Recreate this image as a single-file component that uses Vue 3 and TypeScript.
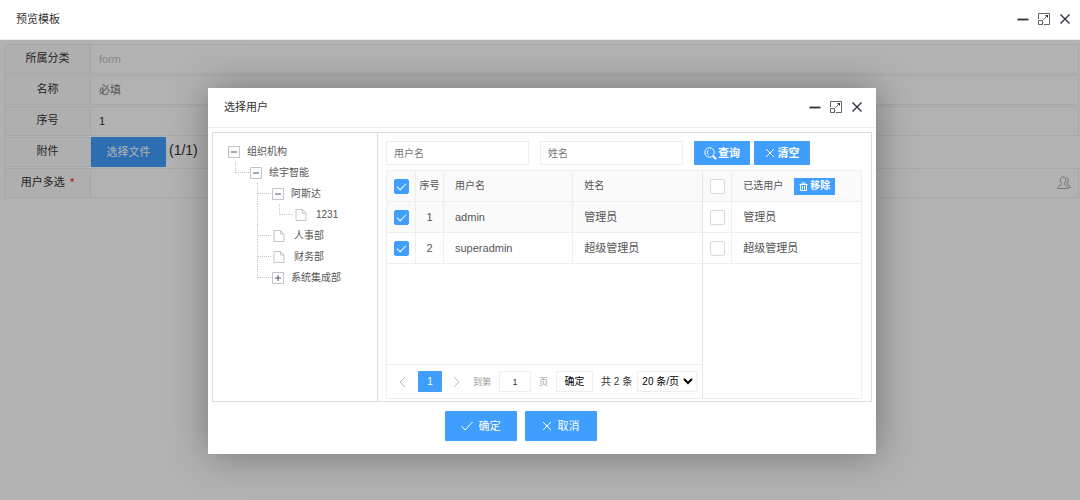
<script setup lang="ts">
import { ref, computed } from 'vue'

type Guide = 'blank' | 'line' | 'tee' | 'end'
interface TreeNode {
  label: string
  kind: 'open' | 'closed' | 'file'
  guides: Guide[]
}
interface User {
  account: string
  name: string
  checked: boolean
  picked: boolean
}

const category = ref('form')
const templateName = ref('')
const order = ref('1')
const members = ref('')
const accountQuery = ref('')
const nameQuery = ref('')
const pageNumber = ref('1')
const pageSize = ref('20')
const allPicked = ref(false)

const tree: TreeNode[] = [
  { label: '组织机构', kind: 'open', guides: [] },
  { label: '绘宇智能', kind: 'open', guides: ['end'] },
  { label: '阿斯达', kind: 'open', guides: ['blank', 'tee'] },
  { label: '1231', kind: 'file', guides: ['blank', 'line', 'end'] },
  { label: '人事部', kind: 'file', guides: ['blank', 'tee'] },
  { label: '财务部', kind: 'file', guides: ['blank', 'tee'] },
  { label: '系统集成部', kind: 'closed', guides: ['blank', 'end'] },
]

const users = ref<User[]>([
  { account: 'admin', name: '管理员', checked: true, picked: false },
  { account: 'superadmin', name: '超级管理员', checked: true, picked: false },
])

const allChecked = computed({
  get: () => users.value.every((u) => u.checked),
  set: (v: boolean) => users.value.forEach((u) => (u.checked = v)),
})

function clearQuery() {
  accountQuery.value = ''
  nameQuery.value = ''
}
</script>

<template>
  <div class="page">
    <header class="titlebar">
      <h1>预览模板</h1>
      <div class="window-tools">
        <button type="button" aria-label="最小化">
          <svg viewBox="0 0 12 12"><path d="M.5 6.500h11" stroke-width="1.800" /></svg>
        </button>
        <button type="button" aria-label="最大化">
          <svg class="expand" viewBox="0 0 12 12"><path d="M.5 6V.5h11v11H6M.5 7.500h4v4h-4zM5.500 6.500l3.500-3.500" /><path class="head" d="M7 2h3v3z" /></svg>
        </button>
        <button type="button" aria-label="关闭">
          <svg viewBox="0 0 12 12"><path d="M1.500 1.500l9 9M10.500 1.500l-9 9" stroke-width="1.300" /></svg>
        </button>
      </div>
    </header>

    <main class="stage">
      <form class="form" @submit.prevent>
        <div class="row">
          <label for="f-category">所属分类</label>
          <div class="field"><input id="f-category" v-model="category" class="dim" type="text" disabled /></div>
        </div>
        <div class="row">
          <label for="f-name">名称</label>
          <div class="field"><input id="f-name" v-model="templateName" type="text" placeholder="必填" /></div>
        </div>
        <div class="row">
          <label for="f-order">序号</label>
          <div class="field"><input id="f-order" v-model="order" type="text" /></div>
        </div>
        <div class="row">
          <label for="f-file">附件</label>
          <div class="attach">
            <button id="f-file" type="button" class="primary upload">选择文件</button>
            <span class="count">(1/1)</span>
          </div>
        </div>
        <div class="row">
          <label for="f-members">用户多选 <span class="required">*</span></label>
          <div class="field">
            <input id="f-members" v-model="members" type="text" />
            <button type="button" class="people" aria-label="选择用户">
              <svg viewBox="0 0 14 14"><path d="M6 1C4 1 3 2.500 3.200 4.500c.1 1.300.6 2.200 1.300 2.900 0 1.200-.4 1.600-1.500 2.100C1.500 10.200.7 11 .7 12.500h10.600c0-1.500-.8-2.300-2.300-3-1-.5-1.500-.9-1.500-2.100.7-.7 1.200-1.600 1.300-2.900C9 2.500 8 1 6 1zM9 1.500c1.700.2 2.500 1.400 2.300 3-.1 1.200-.5 2-1.100 2.600 0 1 .4 1.500 1.300 1.900 1.200.5 1.700 1.300 1.700 2.500h-1.500" /></svg>
            </button>
          </div>
        </div>
      </form>

      <div class="shade">
        <section class="dialog" role="dialog" aria-labelledby="dialog-title">
          <header class="titlebar dialog-title">
            <h2 id="dialog-title">选择用户</h2>
            <div class="window-tools">
              <button type="button" aria-label="最小化">
                <svg viewBox="0 0 12 12"><path d="M.5 6.500h11" stroke-width="1.800" /></svg>
              </button>
              <button type="button" aria-label="最大化">
                <svg class="expand" viewBox="0 0 12 12"><path d="M.5 6V.5h11v11H6M.5 7.500h4v4h-4zM5.500 6.500l3.500-3.500" /><path class="head" d="M7 2h3v3z" /></svg>
              </button>
              <button type="button" aria-label="关闭">
                <svg viewBox="0 0 12 12"><path d="M1.500 1.500l9 9M10.500 1.500l-9 9" stroke-width="1.300" /></svg>
              </button>
            </div>
          </header>

          <div class="panes">
            <ul class="tree">
              <li v-for="node in tree" :key="node.label">
                <span v-for="(g, i) in node.guides" :key="i" class="guide" :class="g"></span>
                <svg v-if="node.kind === 'file'" class="file" viewBox="0 0 12 14"><path d="M1 1.500h6.500L11 5v7.500H1zM7.500 1.500V5H11" /></svg>
                <svg v-else class="toggle" viewBox="0 0 12 12">
                  <path class="frame" d="M.5.5h11v11H.5z" />
                  <path class="sign" d="M3 6h6" />
                  <path v-if="node.kind === 'closed'" class="sign" d="M6 3v6" />
                </svg>
                <span class="node-label">{{ node.label }}</span>
              </li>
            </ul>

            <div class="work">
              <form class="search" @submit.prevent>
                <input v-model="accountQuery" type="text" placeholder="用户名" aria-label="用户名" />
                <input v-model="nameQuery" type="text" placeholder="姓名" aria-label="姓名" />
                <div class="search-actions">
                  <button type="submit" class="primary">
                    <svg class="lens" viewBox="0 0 13 13"><circle cx="5.500" cy="5.500" r="4.700" /><path d="M9 9l3.200 3.200" stroke-width="2" /><path d="M4.500 3.200C3 4 3 7 4.500 7.800" /></svg>查询
                  </button>
                  <button type="button" class="primary" @click="clearQuery">
                    <svg class="cross" viewBox="0 0 10 10"><path d="M1 1l8 8M9 1l-8 8" /></svg>清空
                  </button>
                </div>
              </form>

              <div class="grids">
                <div class="grid left">
                  <table>
                    <colgroup><col class="c-check" /><col class="c-no" /><col class="c-text" /><col class="c-text" /></colgroup>
                    <thead>
                      <tr>
                        <th class="mid"><input v-model="allChecked" type="checkbox" aria-label="全选" /></th>
                        <th class="mid">序号</th>
                        <th>用户名</th>
                        <th>姓名</th>
                      </tr>
                    </thead>
                    <tbody>
                      <tr v-for="(u, i) in users" :key="u.account" :class="{ hover: i === 0 }">
                        <td class="mid"><input v-model="u.checked" type="checkbox" :aria-label="u.account" /></td>
                        <td class="mid">{{ i + 1 }}</td>
                        <td>{{ u.account }}</td>
                        <td>{{ u.name }}</td>
                      </tr>
                    </tbody>
                  </table>
                  <nav class="pager" aria-label="分页">
                    <button type="button" class="arrow" aria-label="上一页"><svg viewBox="0 0 8 12"><path d="M7 1L2 6l5 5" /></svg></button>
                    <button type="button" class="primary current">1</button>
                    <button type="button" class="arrow" aria-label="下一页"><svg viewBox="0 0 8 12"><path d="M1 1l5 5-5 5" /></svg></button>
                    <label class="goto">到第<input v-model="pageNumber" type="text" />页</label>
                    <button type="button" class="go">确定</button>
                    <span class="total">共 2 条</span>
                    <select v-model="pageSize" aria-label="每页条数">
                      <option value="20">20 条/页</option>
                      <option value="50">50 条/页</option>
                    </select>
                  </nav>
                </div>

                <div class="grid right">
                  <table>
                    <colgroup><col class="c-check" /><col /></colgroup>
                    <thead>
                      <tr>
                        <th class="mid"><input v-model="allPicked" type="checkbox" aria-label="全选已选用户" /></th>
                        <th>
                          <div class="picked-head">
                            已选用户
                            <button type="button" class="primary remove">
                              <svg viewBox="0 0 9 9"><path d="M.5 2.500h8M3 2.500V1h3v1.500M1.500 3v5.500h6V3M3.500 4v3.500M5.500 4v3.500" /></svg>移除
                            </button>
                          </div>
                        </th>
                      </tr>
                    </thead>
                    <tbody>
                      <tr v-for="u in users" :key="u.account">
                        <td class="mid"><input v-model="u.picked" type="checkbox" :aria-label="u.name" /></td>
                        <td>{{ u.name }}</td>
                      </tr>
                    </tbody>
                  </table>
                </div>
              </div>
            </div>
          </div>

          <footer class="actions">
            <button type="button" class="primary">
              <svg class="tick" viewBox="0 0 12 10"><path d="M.5 5l3.500 4L11.500 1" /></svg>确定
            </button>
            <button type="button" class="primary">
              <svg class="cross" viewBox="0 0 10 10"><path d="M1 1l8 8M9 1l-8 8" /></svg>取消
            </button>
          </footer>
        </section>
      </div>
    </main>
  </div>
</template>

<style>
html,
body {
  background: #fff;
}
</style>

<style scoped>
.page,
.page * {
  box-sizing: border-box;
}
.page {
  display: flex;
  flex-direction: column;
  min-height: 100vh;
  font-family: 'Liberation Sans', 'Noto Sans CJK SC', sans-serif;
  font-size: 11px;
  line-height: 16px;
  color: #333;
}
button,
input,
select {
  font: inherit;
  color: inherit;
  margin: 0;
  padding: 0;
  border: 0;
  background: none;
  min-width: 0;
}
svg {
  display: block;
  flex: none;
  fill: none;
  stroke: currentColor;
}
.titlebar {
  display: flex;
  align-items: center;
  justify-content: space-between;
  height: 40px;
  padding: 0 9px 2px 16px;
  border-bottom: 1px solid #eee;
  background: #fff;
}
.titlebar h1,
.titlebar h2 {
  margin: 0;
  font-size: 11px;
  font-weight: 400;
}
.window-tools {
  display: flex;
  gap: 9px;
  color: #2e2d3c;
}
.window-tools svg {
  width: 12px;
  height: 12px;
}
.window-tools .expand {
  color: #62616c;
}
.head {
  fill: #2e2d3c;
  stroke: none;
}
.primary {
  display: inline-flex;
  align-items: center;
  justify-content: center;
  background: #409eff;
  color: #fff;
  border-radius: 1px;
}

.stage {
  position: relative;
  flex: 1;
}
.form {
  display: flex;
  flex-direction: column;
  gap: 1px;
  padding: 4px 1px 4px 4px;
}
.row {
  display: flex;
  height: 30px;
}
.row > label {
  flex: none;
  width: 87px;
  line-height: 27px;
  text-align: center;
  background: #fbfbfb;
  border: 1px solid #f0f0f0;
  border-radius: 1px 0 0 1px;
}
.required {
  color: #f00;
  margin-left: 2px;
}
.field {
  flex: 1;
  display: flex;
  align-items: center;
  border: 1px solid #f0f0f0;
  border-left: 0;
  padding: 0 7px 0 8px;
}
.field input {
  flex: 1;
  height: 28px;
}
.field .dim {
  color: #c4c4c4;
}
input::placeholder {
  color: #757575;
  opacity: 1;
}
.people {
  color: #a8a8a8;
}
.people svg {
  width: 14px;
  height: 14px;
}
.attach {
  display: flex;
}
.upload {
  width: 75px;
  height: 30px;
}
.count {
  margin-left: 3px;
  font-size: 14px;
  line-height: 26px;
}

.shade {
  position: absolute;
  inset: 0;
  padding: 48px 204px 46px 208px;
  background: rgba(0, 0, 0, 0.3);
}
.dialog {
  background: #fff;
  border-radius: 1px;
  box-shadow: 1px 1px 38px rgba(0, 0, 0, 0.35);
}
.dialog-title {
  padding-right: 13px;
}
.panes {
  display: flex;
  margin: 4px 4px 0;
  border: 1px solid #ddd;
  min-height: 270px;
  color: #555;
}
.tree {
  flex: none;
  width: 165px;
  margin: 0;
  padding: 8px 0 0 15px;
  border-right: 1px solid #ddd;
  list-style: none;
  font-size: 10px;
}
.tree li {
  display: flex;
  align-items: center;
  height: 21px;
}
.guide {
  position: relative;
  align-self: stretch;
  width: 22px;
}
.tee::before,
.line::before,
.end::before {
  content: '';
  position: absolute;
  left: 7px;
  top: 0;
  bottom: 0;
  border-left: 1px dotted #c0c4cc;
}
.line::before {
  left: 7px;
}
.end::before {
  bottom: 10px;
}
.tee::after,
.end::after {
  content: '';
  position: absolute;
  left: 7px;
  right: 1px;
  top: 10px;
  border-top: 1px dotted #c0c4cc;
}
.toggle {
  width: 12px;
  height: 12px;
}
.frame {
  stroke: #c0c4cc;
}
.sign {
  stroke: #555;
}
.file {
  width: 12px;
  height: 14px;
  margin: 0 2px 0 1px;
  stroke: #c0c4cc;
}
.node-label {
  margin-left: 7px;
}

.work {
  flex: 1;
  display: flex;
  flex-direction: column;
  gap: 5px;
  padding: 8px 9px 2px 8px;
}
.search {
  display: flex;
  gap: 11px;
  font-size: 10px;
}
.search > input {
  width: 143px;
  height: 24px;
  padding: 0 7px;
  border: 1px solid #eee;
}
.search-actions {
  display: flex;
  gap: 4px;
  font-size: 11px;
}
.search-actions .primary {
  width: 56px;
  height: 24px;
  gap: 1px;
  font-weight: 700;
}
.lens {
  width: 13px;
  height: 13px;
}
.cross {
  width: 10px;
  height: 10px;
}
.search-actions .cross {
  margin-right: 2px;
}
.grids {
  flex: 1;
  display: flex;
  border: 1px solid #eee;
}
.grid {
  display: flex;
  flex-direction: column;
}
.left {
  flex: 2;
  border-right: 1px solid #e6e6e6;
}
.right {
  flex: 1;
}
table {
  width: 100%;
  table-layout: fixed;
  border-collapse: separate;
  border-spacing: 0;
}
.c-check {
  width: 29px;
}
.c-no {
  width: 28px;
}
th,
td {
  height: 31px;
  padding: 0 0 0 11px;
  text-align: left;
  font-weight: 400;
  border-right: 1px solid #eee;
  border-bottom: 1px solid #eee;
}
th:last-child,
td:last-child {
  border-right: 0;
}
th {
  font-size: 10px;
  background: #fafafa;
}
.hover td {
  background: #fafafa;
}
th.mid,
td.mid {
  padding: 0;
  text-align: center;
}
input[type='checkbox'] {
  appearance: none;
  display: block;
  position: relative;
  width: 15px;
  height: 15px;
  margin: 0 auto;
  border: 1px solid #d8d8d8;
  border-radius: 2px;
  background: #fff;
}
input[type='checkbox']:checked {
  border-color: #409eff;
  background: #409eff;
}
input[type='checkbox']:checked::after {
  content: '';
  position: absolute;
  left: 2px;
  top: 3px;
  width: 8px;
  height: 4px;
  border: solid #fff;
  border-width: 0 0 1px 1px;
  transform: rotate(-45deg);
}
.picked-head {
  display: flex;
  align-items: center;
  gap: 11px;
}
.remove {
  width: 41px;
  height: 17px;
  gap: 2px;
  font-weight: 700;
  border-radius: 0;
}
.remove svg {
  width: 9px;
  height: 9px;
}
.pager {
  display: flex;
  align-items: center;
  height: 34px;
  margin-top: auto;
  padding: 0 5px 0 11px;
  border-top: 1px solid #eee;
  font-size: 10px;
  white-space: nowrap;
}
.arrow {
  color: #bbb;
}
.arrow svg {
  width: 8px;
  height: 12px;
}
.current {
  width: 24px;
  height: 21px;
  margin: 0 11px 0 12px;
}
.goto {
  display: flex;
  align-items: center;
  gap: 8px;
  margin-left: 12px;
  font-size: 9px;
  color: #999;
}
.goto input {
  width: 32px;
  height: 21px;
  border: 1px solid #eee;
  text-align: center;
  color: #333;
}
.go {
  width: 37px;
  height: 21px;
  margin: 0 8px;
  border: 1px solid #eee;
  color: #000;
}
.total {
  color: #333;
}
.pager select {
  width: 60px;
  height: 21px;
  margin-left: auto;
  border: 1px solid #eee;
  background: #fff;
  color: #000;
}
.actions {
  display: flex;
  justify-content: center;
  gap: 8px;
  padding: 9px 43px 13px 0;
}
.actions .primary {
  width: 72px;
  height: 30px;
  gap: 6px;
}
.tick {
  width: 12px;
  height: 10px;
}
</style>
